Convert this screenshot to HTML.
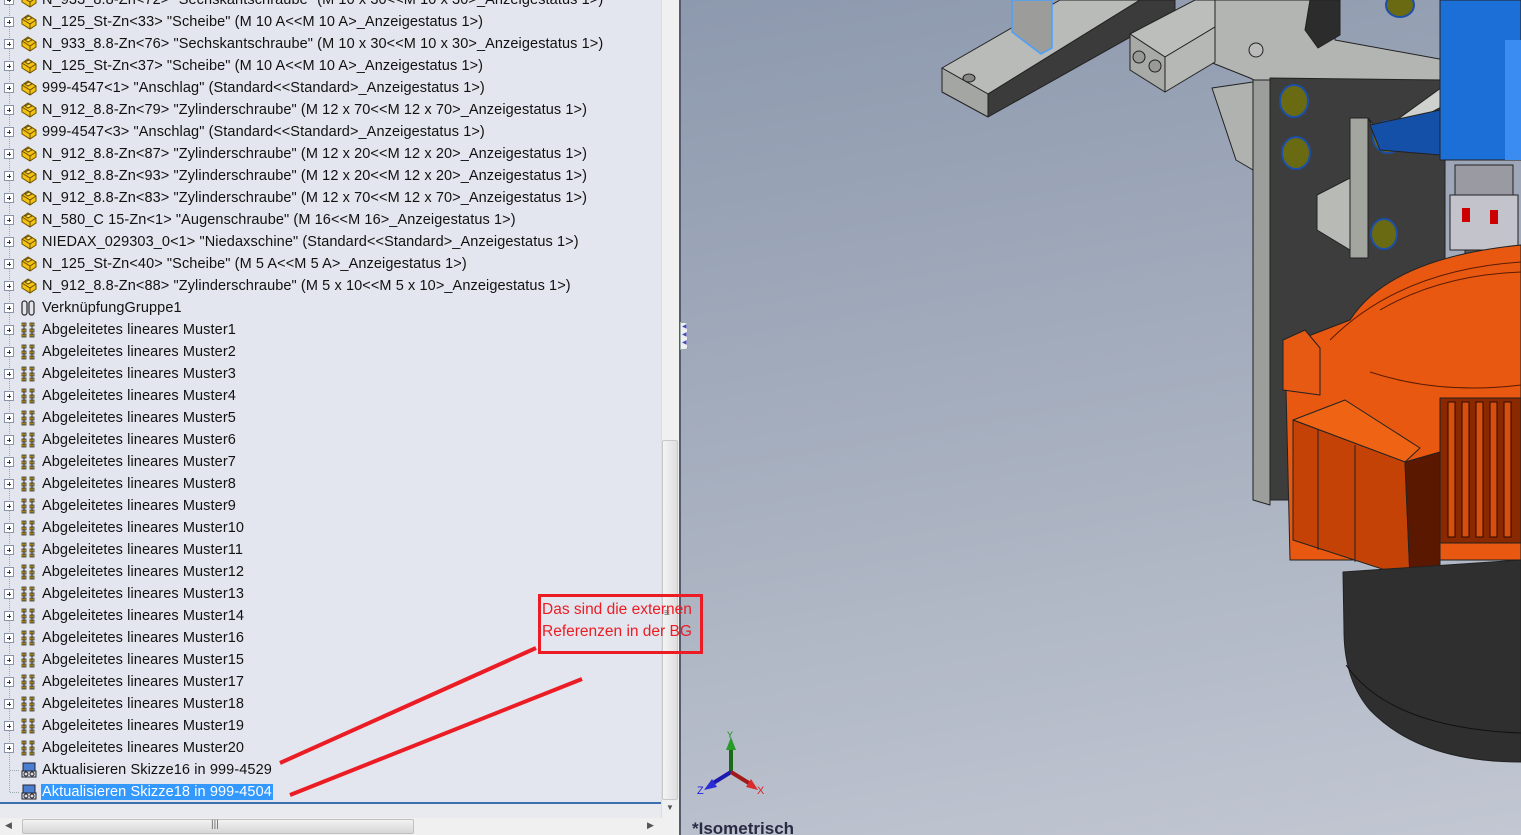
<!DOCTYPE html>
<html><head><meta charset="utf-8">
<style>
*{margin:0;padding:0;box-sizing:border-box}
body{width:1521px;height:835px;overflow:hidden;position:relative;background:#e3e6ee;font-family:"Liberation Sans",sans-serif}
#tree{position:absolute;left:0;top:0;width:661px;height:803px;background:#e3e6ee;overflow:hidden}
.row{position:absolute;left:0;height:22px;width:661px;font-size:14.5px;letter-spacing:0.1px;line-height:22px;color:#111;white-space:nowrap}
.row .pb{position:absolute;left:4px;top:6px;width:10px;height:10px;border:1px solid #8a94a6;background:#fff}
.row .pb:before{content:"";position:absolute;left:2px;top:4px;width:4px;height:1px;background:#334}
.row .pb:after{content:"";position:absolute;left:4px;top:2px;width:1px;height:4px;background:#334}
.row .ic{position:absolute;left:20px;top:2px;width:18px;height:18px}
.row .t{position:absolute;left:42px;top:0}
.sel{background:#3399ff;color:#fff;padding:0 1px;margin-left:-1px}
.vline{position:absolute;left:9px;border-left:1px dotted #9aa;}
</style></head><body>
<div id="tree">
<div class="vline" style="top:0;height:792px"></div>
</div>

<div style="position:absolute;left:661px;top:0;width:18px;height:818px;background:#f0f0f0;border-left:1px solid #ddd"></div>
<div style="position:absolute;left:662px;top:440px;width:16px;height:360px;background:linear-gradient(90deg,#f4f4f4,#dedede);border:1px solid #c8c8c8;border-radius:2px"></div>
<div style="position:absolute;left:664px;top:612px;font-size:10px;color:#666;line-height:4px">≡</div>
<div style="position:absolute;left:666px;top:803px;font-size:8px;color:#555">▼</div>
<div style="position:absolute;left:0;top:802px;width:661px;height:2px;background:#3a6fb0"></div>
<div style="position:absolute;left:0;top:804px;width:661px;height:14px;background:#e8eaf0"></div>
<div style="position:absolute;left:0;top:818px;width:679px;height:17px;background:#f0f0f0"></div>
<div style="position:absolute;left:22px;top:819px;width:392px;height:15px;background:linear-gradient(#f2f2f2,#d6d6d6);border:1px solid #c0c0c0;border-radius:2px"></div>
<div style="position:absolute;left:211px;top:819px;font-size:10px;color:#666">|||</div>
<div style="position:absolute;left:5px;top:820px;font-size:9px;color:#555">◀</div>
<div style="position:absolute;left:647px;top:820px;font-size:9px;color:#555">▶</div>

<div style="position:absolute;left:679px;top:0;width:2px;height:835px;background:#555b6c"></div>
<div style="position:absolute;left:681px;top:0;width:840px;height:835px;background:linear-gradient(170deg,#8d99ae 0%,#a4adbd 45%,#c2c7d2 100%)"></div>
<div style="position:absolute;left:680px;top:322px;width:8px;height:28px;background:#eef0f4;border:1px solid #9aa;border-radius:0 3px 3px 0;font-size:6px;color:#4a4ab0;line-height:8px;padding-left:1px">◀<br>◀<br>◀</div>

<svg style="position:absolute;left:0;top:0" width="1521" height="835" viewBox="0 0 1521 835">
<g stroke="#222" stroke-width="1" stroke-linejoin="round">
<polygon points="942,68 1060,0 1140,0 988,94" fill="#b9bbb8"/>
<polygon points="942,68 988,94 988,117 942,92" fill="#a4a6a3"/>
<polygon points="988,94 1140,0 1175,0 1175,12 988,117" fill="#3b3b3b"/>
<polygon points="1012,0 1052,0 1052,48 1041,54 1012,32" fill="#9c9d9a" stroke="#4aa0ff" stroke-width="1.5"/>
<ellipse cx="969" cy="78" rx="6" ry="4" fill="#888"/>
<polygon points="1195,0 1335,0 1335,40 1445,60 1445,85 1380,132 1330,118 1250,78 1200,58" fill="#b3b5b2"/>
<polygon points="1310,0 1340,0 1340,35 1318,48 1305,30" fill="#2c2c2c"/>
<polygon points="1270,78 1445,80 1445,500 1270,500" fill="#3d3d3d"/>
<polygon points="1253,80 1270,80 1270,505 1253,500" fill="#9c9e9b"/>
<polygon points="1212,88 1253,82 1253,170 1236,160" fill="#b0b2af"/>
<polygon points="1350,118 1368,118 1368,258 1350,258" fill="#a3a59f"/>
<polygon points="1317,195 1350,178 1350,250 1317,230" fill="#b8bab6"/>
<polygon points="1368,118 1380,132 1445,85 1445,105 1380,140" fill="#cfd1ce"/>
<polygon points="1130,34 1195,0 1215,0 1215,27 1165,57" fill="#bcbebb"/>
<polygon points="1130,34 1165,57 1165,92 1130,70" fill="#a8aaa7"/>
<polygon points="1165,57 1215,27 1215,62 1165,92" fill="#b6b8b5"/>
<circle cx="1139" cy="57" r="6" fill="#999"/><circle cx="1155" cy="66" r="6" fill="#999"/>
<circle cx="1256" cy="50" r="7" fill="#bbb"/>
<g fill="#6a6a12" stroke="#1c4fa8" stroke-width="2">
<ellipse cx="1294" cy="101" rx="14" ry="16"/><ellipse cx="1296" cy="153" rx="14" ry="16"/>
<ellipse cx="1388" cy="137" rx="15" ry="16"/><ellipse cx="1384" cy="234" rx="13" ry="15"/>
<ellipse cx="1400" cy="5" rx="14" ry="12"/><ellipse cx="1314" cy="356" rx="8" ry="9"/>
</g>
<rect x="1440" y="0" width="81" height="160" fill="#1c6fd6"/>
<rect x="1505" y="40" width="16" height="120" fill="#3b8cf0" stroke="none"/>
<polygon points="1370,125 1440,110 1440,155 1380,150" fill="#1550a8"/>
<rect x="1455" y="165" width="58" height="40" fill="#9a9aa2"/>
<rect x="1450" y="195" width="68" height="55" fill="#c3c3cb"/>
<rect x="1462" y="208" width="8" height="14" fill="#c00" stroke="none"/><rect x="1490" y="210" width="8" height="14" fill="#c00" stroke="none"/>
<rect x="1465" y="250" width="45" height="45" fill="#5a5a5e"/>
<path d="M1350,320 Q1390,258 1521,245 L1521,560 L1290,560 L1285,345 Z" fill="#e85810"/>
<path d="M1330,340 Q1400,270 1521,262" fill="none" stroke="#5a1a00"/>
<path d="M1380,310 Q1440,275 1521,272" fill="none" stroke="#5a1a00"/>
<path d="M1370,372 Q1440,395 1521,385" fill="none" stroke="#5a1a00"/>
<rect x="1440" y="398" width="81" height="145" fill="#8a2800"/>
<g stroke="#2a0a00" fill="#d84e0c">
<rect x="1448" y="402" width="7" height="135"/><rect x="1462" y="402" width="7" height="135"/><rect x="1476" y="402" width="7" height="135"/><rect x="1490" y="402" width="7" height="135"/><rect x="1504" y="402" width="7" height="135"/>
</g>
<path d="M1283,340 L1305,330 L1320,348 L1320,395 L1283,390 Z" fill="#e65a14"/>
<polygon points="1293,420 1345,400 1420,448 1405,462" fill="#ee6414"/>
<polygon points="1293,420 1405,462 1410,578 1293,540" fill="#c44206"/>
<polygon points="1405,462 1440,452 1440,568 1410,578" fill="#5a1800"/>
<line x1="1318" y1="430" x2="1318" y2="550"/><line x1="1355" y1="445" x2="1355" y2="562"/>
<path d="M1343,572 L1521,560 L1521,762 Q1420,762 1370,710 Q1344,680 1344,630 Z" fill="#2f2f2f"/>
<path d="M1346,665 Q1390,728 1521,733" fill="none" stroke="#111"/>
</g>
<line x1="280" y1="763" x2="536" y2="648" stroke="#ec1c24" stroke-width="4"/>
<line x1="290" y1="795" x2="582" y2="679" stroke="#ec1c24" stroke-width="4"/>
<rect x="539.5" y="595.5" width="162" height="57" fill="none" stroke="#ec1c24" stroke-width="3"/>
<text x="542" y="614" font-family="Liberation Sans,sans-serif" font-size="15.5" fill="#ec1c24">Das sind die externen</text>
<text x="542" y="636" font-family="Liberation Sans,sans-serif" font-size="15.5" fill="#ec1c24">Referenzen in der BG</text>
<line x1="731" y1="772" x2="731" y2="748" stroke="#1a6a1a" stroke-width="4"/>
<polygon points="726,750 731,737 736,750" fill="#2a9a2a"/>
<line x1="731" y1="772" x2="710" y2="785" stroke="#1a1ab0" stroke-width="4"/>
<polygon points="704,790 712,779 717,787" fill="#2b2bd8"/>
<line x1="731" y1="772" x2="752" y2="785" stroke="#a01a1a" stroke-width="4"/>
<polygon points="758,790 746,787 751,779" fill="#d82b2b"/>
<text x="727" y="738" font-size="9" fill="#1a8a1a" font-family="Liberation Sans,sans-serif">Y</text>
<text x="697" y="794" font-size="11" fill="#2222dd" font-family="Liberation Sans,sans-serif">Z</text>
<text x="757" y="794" font-size="11" fill="#dd2222" font-family="Liberation Sans,sans-serif">X</text>
<text x="692" y="834" font-size="17" fill="#2a2a44" font-weight="bold" font-family="Liberation Sans,sans-serif">*Isometrisch</text>
</svg>

<script>
var part='<svg class="ic" viewBox="0 0 18 18"><path d="M2,6 L8,2 L16,7 L16,12 L10,16 L2,11 Z" fill="#f5c20f" stroke="#6a5000"/><path d="M2,6 L10,11 L16,7 M10,11 L10,16" fill="none" stroke="#6a5000"/><path d="M5,5 L9,3 L12,5 L8,7 Z" fill="#ffe070" stroke="#6a5000"/></svg>';
var must='<svg class="ic" viewBox="0 0 18 18"><g fill="#f5c20f" stroke="#333" stroke-width="0.8"><rect x="2" y="2" width="4" height="3"/><rect x="10" y="2" width="4" height="3"/><rect x="2" y="8" width="4" height="3"/><rect x="10" y="8" width="4" height="3"/><rect x="2" y="13" width="4" height="3"/><rect x="10" y="13" width="4" height="3"/></g><path d="M4,2 V16 M12,2 V16" stroke="#333" fill="none"/></svg>';
var clip='<svg class="ic" viewBox="0 0 18 18"><g fill="none" stroke="#333" stroke-width="1.3"><rect x="2" y="2" width="5" height="14" rx="2.5"/><rect x="9" y="2" width="5" height="14" rx="2.5"/></g></svg>';
var upd='<svg class="ic" viewBox="0 0 18 18"><rect x="3" y="2" width="12" height="9" fill="#4a7fd0" stroke="#223"/><rect x="2" y="10" width="14" height="6" fill="#ddd" stroke="#223"/><circle cx="6" cy="13" r="2" fill="none" stroke="#223"/><circle cx="12" cy="13" r="2" fill="none" stroke="#223"/></svg>';
var rows=[
['p','N_933_8.8-Zn<72> "Sechskantschraube" (M 10 x 30<<M 10 x 30>_Anzeigestatus 1>)'],
['p','N_125_St-Zn<33> "Scheibe" (M 10 A<<M 10 A>_Anzeigestatus 1>)'],
['p','N_933_8.8-Zn<76> "Sechskantschraube" (M 10 x 30<<M 10 x 30>_Anzeigestatus 1>)'],
['p','N_125_St-Zn<37> "Scheibe" (M 10 A<<M 10 A>_Anzeigestatus 1>)'],
['p','999-4547<1> "Anschlag" (Standard<<Standard>_Anzeigestatus 1>)'],
['p','N_912_8.8-Zn<79> "Zylinderschraube" (M 12 x 70<<M 12 x 70>_Anzeigestatus 1>)'],
['p','999-4547<3> "Anschlag" (Standard<<Standard>_Anzeigestatus 1>)'],
['p','N_912_8.8-Zn<87> "Zylinderschraube" (M 12 x 20<<M 12 x 20>_Anzeigestatus 1>)'],
['p','N_912_8.8-Zn<93> "Zylinderschraube" (M 12 x 20<<M 12 x 20>_Anzeigestatus 1>)'],
['p','N_912_8.8-Zn<83> "Zylinderschraube" (M 12 x 70<<M 12 x 70>_Anzeigestatus 1>)'],
['p','N_580_C 15-Zn<1> "Augenschraube" (M 16<<M 16>_Anzeigestatus 1>)'],
['p','NIEDAX_029303_0<1> "Niedaxschine" (Standard<<Standard>_Anzeigestatus 1>)'],
['p','N_125_St-Zn<40> "Scheibe" (M 5 A<<M 5 A>_Anzeigestatus 1>)'],
['p','N_912_8.8-Zn<88> "Zylinderschraube" (M 5 x 10<<M 5 x 10>_Anzeigestatus 1>)'],
['c','VerknüpfungGruppe1']];
var ms=[1,2,3,4,5,6,7,8,9,10,11,12,13,14,16,15,17,18,19,20];
ms.forEach(function(n){rows.push(['m','Abgeleitetes lineares Muster'+n]);});
rows.push(['u','Aktualisieren Skizze16 in 999-4529']);
rows.push(['s','Aktualisieren Skizze18 in 999-4504']);
var h='';
rows.forEach(function(r,i){
 var y=22*i-11;
 var ic=r[0]=='p'?part:r[0]=='m'?must:r[0]=='c'?clip:upd;
 var pb=(r[0]=='u'||r[0]=='s')?'<div style="position:absolute;left:10px;top:11px;width:9px;border-top:1px dotted #9aa"></div>':'<div class="pb"></div>';
 var t=r[1].replace(/&/g,'&amp;').replace(/</g,'&lt;').replace(/>/g,'&gt;');
 if(r[0]=='s') t='<span class="sel">'+t+'</span>';
 h+='<div class="row" style="top:'+y+'px">'+pb+ic+'<span class="t">'+t+'</span></div>';
});
document.getElementById('tree').insertAdjacentHTML('beforeend',h);
</script>
</body></html>
